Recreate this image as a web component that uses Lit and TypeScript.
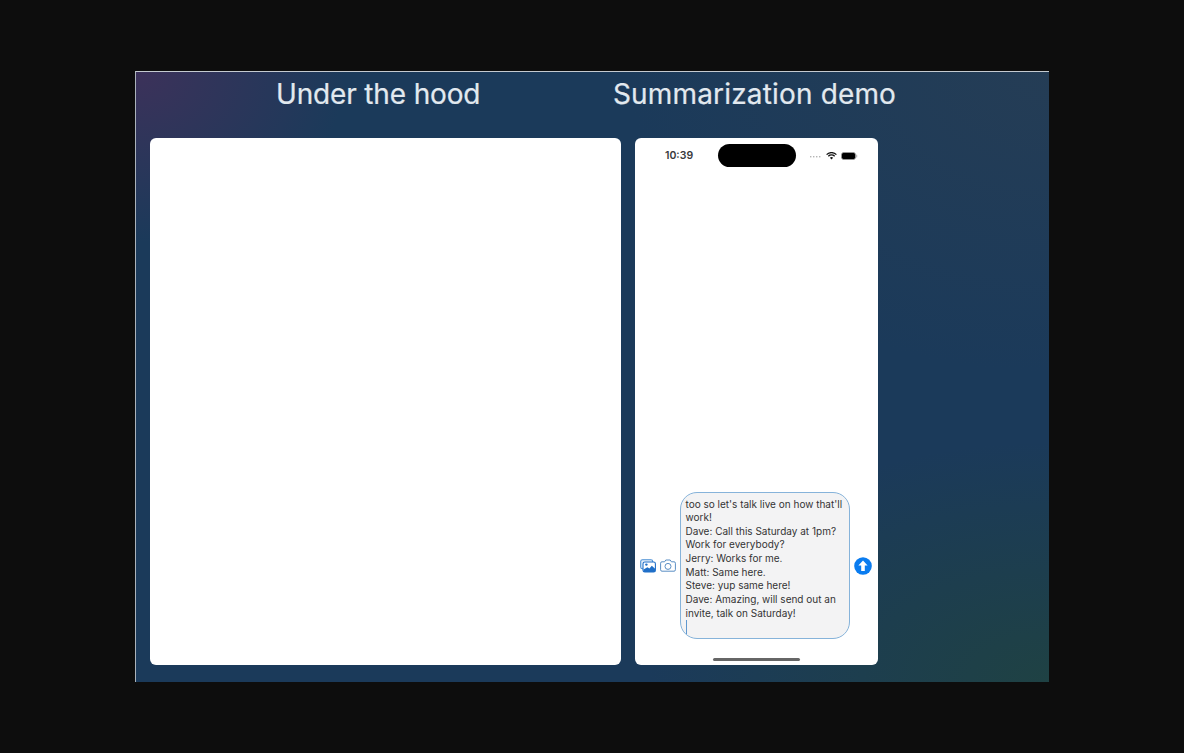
import { LitElement, html, css } from "lit";
import { customElement } from "lit/decorators.js";

@customElement("app-root")
export class AppRoot extends LitElement {
  static styles = css`
    :host { display: block; width: 1184px; height: 753px; background: #0d0d0d; overflow: hidden; }
    .page { padding: 71px 0 0 135px; }
    .slide {
      box-sizing: border-box; width: 914px; height: 611px;
      border-top: 1px solid #c4cad0; border-left: 1px solid #aab2ba;
      display: flex; flex-direction: column;
      background:
        radial-gradient(210px 170px at 0% 0%, rgba(66,48,90,.85), rgba(66,48,90,0) 100%),
        radial-gradient(400px 240px at 100% 100%, rgba(32,68,60,.75), rgba(32,68,60,0) 100%),
        radial-gradient(420px 300px at 100% 0%, rgba(40,62,84,.75), rgba(40,62,84,0) 100%),
        #1b3a5a;
    }
    .titles {
      box-sizing: border-box;
      height: 66px; display: flex; align-items: flex-start; padding: 4px 0 0 140px;
      font: 400 28px/36px Inter, "Noto Sans", sans-serif; color: #e2e9ef;
      -webkit-text-stroke: 0.2px #e2e9ef;
    }
    .t1 { width: 337px; letter-spacing: -0.15px; }
    .t2 { letter-spacing: 0.16px; }
    .panels { display: flex; gap: 14px; padding-left: 14px; }
    .panel { height: 527px; background: #fff; border-radius: 6px; }
    .left { width: 471px; }
    .phone { width: 243px; display: flex; flex-direction: column; font-family: Inter, "Liberation Sans", sans-serif; color: #1c1c1e; }
    .status { display: flex; align-items: center; height: 23px; margin-top: 6px; padding: 0 0 0 30px; }
    .time { width: 53px; font: 600 10.5px/23px Inter, "Liberation Sans", sans-serif; color: #3a3a3c; }
    .island { width: 78px; height: 23px; border-radius: 12px; background: #000; }
    .sys { display: flex; align-items: center; margin-left: 14px; gap: 4px; }
    .spacer { flex: 1; }
    .composer { display: flex; align-items: center; padding-left: 5px; }
    .icons { display: flex; gap: 4px; width: 40px; align-items: center; }
    .bubble {
      box-sizing: border-box; width: 170px; height: 147px;
      border: 1px solid #86b3da; border-radius: 17px; background: #f3f3f4;
      padding: 4.5px 4px 0 4.5px; font-size: 10px; line-height: 13.65px; color: #333335;
    }
    .line { white-space: nowrap; }
    .caret { width: 1.5px; height: 14px; background: #5f97cf; }
    .send { margin-left: 4px; display: flex; }
    .home { width: 87px; height: 3px; border-radius: 2px; background: #666; margin: 19px auto 4px; }
  `;
  render() {
    const lines = [
      "too so let's talk live on how that'll",
      "work!",
      "Dave: Call this Saturday at 1pm?",
      "Work for everybody?",
      "Jerry: Works for me.",
      "Matt: Same here.",
      "Steve: yup same here!",
      "Dave: Amazing, will send out an",
      "invite, talk on Saturday!",
    ];
    return html`
      <div class="page">
        <div class="slide">
          <div class="titles">
            <div class="t1">Under the hood</div>
            <div class="t2">Summarization demo</div>
          </div>
          <div class="panels">
            <div class="panel left"></div>
            <div class="panel phone">
              <div class="status">
                <div class="time">10:39</div>
                <div class="island"></div>
                <div class="sys">
                  <svg width="12" height="4" viewBox="0 0 12 4"><g fill="#b5b5b5"><rect x="0" y="2" width="1.4" height="1.4"/><rect x="3" y="2" width="1.4" height="1.4"/><rect x="6" y="2" width="1.4" height="1.4"/><rect x="9" y="2" width="1.4" height="1.4"/></g></svg>
                  <svg width="11" height="8" viewBox="0 0 11 8"><path d="M.6 2.6a7 7 0 0 1 9.8 0M2.3 4.3a4.6 4.6 0 0 1 6.4 0" fill="none" stroke="#111" stroke-width="1.3"/><path d="M3.9 5.8a2.3 2.3 0 0 1 3.2 0L5.5 7.6z" fill="#111"/></svg>
                  <svg width="17" height="8" viewBox="0 0 17 8"><rect x=".5" y=".5" width="14" height="7" rx="2.2" fill="#000" stroke="#9a9a9a" stroke-width=".8"/><rect x="15.2" y="2.6" width="1" height="2.8" rx=".5" fill="#aaa"/></svg>
                </div>
              </div>
              <div class="spacer"></div>
              <div class="composer">
                <div class="icons">
                  <svg width="16" height="14" viewBox="0 0 16 14"><rect x=".7" y=".7" width="12" height="9" rx="1.8" fill="#e8f1fb" stroke="#4a8fd4" stroke-width="1.1"/><rect x="3" y="3" width="12.4" height="10" rx="1.8" fill="#fff" stroke="#1f6fc8" stroke-width="1.1"/><path d="M3.5 10.4 7.4 8.2l2 1.4 2.4-2.8 3.3 3V13H3.5z" fill="#1f6fc8"/><circle cx="6.4" cy="5.6" r="1.2" fill="#1f6fc8"/></svg>
                  <svg width="16" height="13" viewBox="0 0 16 13"><path d="M2 2.8h2.6L5.8 1h4.4l1.2 1.8H14a1.4 1.4 0 0 1 1.4 1.4v6.6A1.4 1.4 0 0 1 14 12.2H2A1.4 1.4 0 0 1 .6 10.8V4.2A1.4 1.4 0 0 1 2 2.8z" fill="none" stroke="#5b8fc4" stroke-width="1"/><circle cx="8" cy="7.4" r="3" fill="none" stroke="#5b8fc4" stroke-width="1"/></svg>
                </div>
                <div class="bubble">
                  ${lines.map((l) => html`<div class="line">${l}</div>`)}
                  <div class="caret"></div>
                </div>
                <div class="send">
                  <svg width="18" height="18" viewBox="0 0 18 18"><circle cx="9" cy="9" r="8.8" fill="#0a7cf0"/><path d="M9 3.6 13.6 8.4H10.8V14H7.2V8.4H4.4z" fill="#fff"/></svg>
                </div>
              </div>
              <div class="home"></div>
            </div>
          </div>
        </div>
      </div>
    `;
  }
}
